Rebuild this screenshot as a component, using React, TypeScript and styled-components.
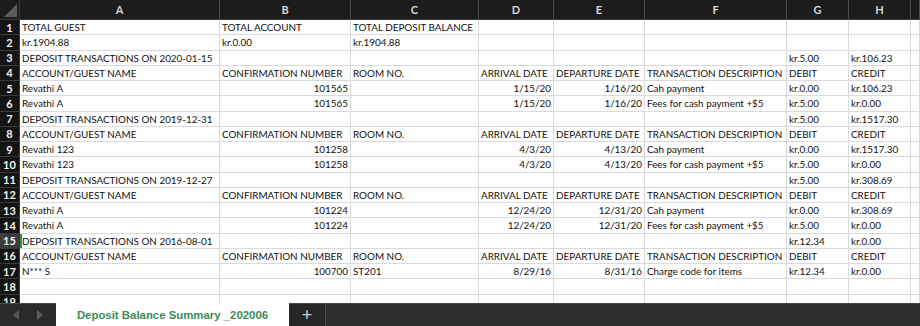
import React from "react";
import styled, { createGlobalStyle } from "styled-components";

const Global = createGlobalStyle`
  html, body { margin: 0; padding: 0; background: #2b2b2b; }
  body { width: 920px; height: 326px; overflow: hidden; }
`;

const ROW_H = 15.25;
const COLS = [200, 131, 128, 75, 91, 142, 62, 62];
const LETTERS = ["A", "B", "C", "D", "E", "F", "G", "H", ""];

type CellData = { t: string; r?: boolean };
const H = ["ACCOUNT/GUEST NAME", "CONFIRMATION NUMBER", "ROOM NO.", "ARRIVAL DATE", "DEPARTURE DATE", "TRANSACTION DESCRIPTION", "DEBIT", "CREDIT"];
const hdr = (): CellData[] => H.map((t) => ({ t }));
const sec = (d: string, g: string, h: string): CellData[] => [
  { t: `DEPOSIT TRANSACTIONS ON ${d}` }, { t: "" }, { t: "" }, { t: "" }, { t: "" }, { t: "" }, { t: g }, { t: h },
];
const tx = (n: string, c: string, room: string, a: string, dep: string, desc: string, g: string, h: string): CellData[] => [
  { t: n }, { t: c, r: true }, { t: room }, { t: a, r: true }, { t: dep, r: true }, { t: desc }, { t: g }, { t: h },
];
const empty = (): CellData[] => COLS.map(() => ({ t: "" }));

const ROWS: CellData[][] = [
  [{ t: "TOTAL GUEST" }, { t: "TOTAL ACCOUNT" }, { t: "TOTAL DEPOSIT BALANCE" }, { t: "" }, { t: "" }, { t: "" }, { t: "" }, { t: "" }],
  [{ t: "kr.1904.88" }, { t: "kr.0.00" }, { t: "kr.1904.88" }, { t: "" }, { t: "" }, { t: "" }, { t: "" }, { t: "" }],
  sec("2020-01-15", "kr.5.00", "kr.106.23"),
  hdr(),
  tx("Revathi A", "101565", "", "1/15/20", "1/16/20", "Cah payment", "kr.0.00", "kr.106.23"),
  tx("Revathi A", "101565", "", "1/15/20", "1/16/20", "Fees for cash payment +$5", "kr.5.00", "kr.0.00"),
  sec("2019-12-31", "kr.5.00", "kr.1517.30"),
  hdr(),
  tx("Revathi 123", "101258", "", "4/3/20", "4/13/20", "Cah payment", "kr.0.00", "kr.1517.30"),
  tx("Revathi 123", "101258", "", "4/3/20", "4/13/20", "Fees for cash payment +$5", "kr.5.00", "kr.0.00"),
  sec("2019-12-27", "kr.5.00", "kr.308.69"),
  hdr(),
  tx("Revathi A", "101224", "", "12/24/20", "12/31/20", "Cah payment", "kr.0.00", "kr.308.69"),
  tx("Revathi A", "101224", "", "12/24/20", "12/31/20", "Fees for cash payment +$5", "kr.5.00", "kr.0.00"),
  sec("2016-08-01", "kr.12.34", "kr.0.00"),
  hdr(),
  tx("N*** S", "100700", "ST201", "8/29/16", "8/31/16", "Charge code for items", "kr.12.34", "kr.0.00"),
  empty(),
  empty(),
];

const Page = styled.div`
  width: 920px;
  height: 326px;
  display: flex;
  flex-direction: column;
  overflow: hidden;
`;

const Sheet = styled.div`
  height: 303px;
  overflow: hidden;
  background: #ffffff;
  display: grid;
  grid-template-columns: 20px ${COLS.map((c) => `${c}px`).join(" ")} 1fr;
  grid-auto-rows: ${ROW_H}px;
  grid-template-rows: 20px;
  align-content: start;
`;

const Corner = styled.div`
  background: #1c1c1c;
  border-right: 1px solid #3a3a3a;
  border-bottom: 1px solid #3a3a3a;
  box-sizing: border-box;
  position: relative;
  &::after {
    content: "";
    position: absolute;
    right: 2px;
    bottom: 2px;
    width: 0;
    height: 0;
    border-left: 13px solid transparent;
    border-bottom: 13px solid #5a5a5a;
  }
`;

const ColHead = styled.div`
  background: #1c1c1c;
  color: #d6d6d6;
  font-family: "Lato", "Open Sans", sans-serif;
  font-weight: 700;
  font-size: 11px;
  display: flex;
  align-items: center;
  justify-content: center;
  border-right: 1px solid #4a4a4a;
  border-bottom: 1px solid #3a3a3a;
  box-sizing: border-box;
`;

const RowHead = styled.div<{ $active?: boolean }>`
  background: ${(p) => (p.$active ? "#3c3c3c" : "#141414")};
  color: #f2f2f2;
  font-family: "Lato", "Open Sans", sans-serif;
  font-weight: 700;
  font-size: 11px;
  display: flex;
  align-items: center;
  justify-content: center;
  border-bottom: 1px solid #3a3a3a;
  border-right: 1px solid #3a3a3a;
  box-sizing: border-box;
`;

const Cell = styled.div<{ $right?: boolean; $sel?: boolean }>`
  color: #111111;
  font-family: "Lato", "Open Sans", sans-serif;
  font-size: 9.9px;
  line-height: 14px;
  padding: 0 2px;
  white-space: nowrap;
  overflow: hidden;
  display: flex;
  align-items: center;
  justify-content: ${(p) => (p.$right ? "flex-end" : "flex-start")};
  border-right: 1px solid #dadada;
  border-bottom: 1px solid #dadada;
  box-sizing: border-box;
  ${(p) => (p.$sel ? "box-shadow: inset 2px 0 0 #2f8a4c;" : "")}
`;

const TabBar = styled.div`
  height: 23px;
  display: flex;
  background: #2e2e2e;
  border-top: 1px solid #4a4a4a;
  box-sizing: border-box;
`;

const Nav = styled.div`
  width: 56px;
  display: flex;
  align-items: center;
  justify-content: space-around;
  background: #2a2a2a;
  padding: 0 4px;
  box-sizing: border-box;
`;

const Tab = styled.div`
  width: 233px;
  background: #ffffff;
  color: #3d8c58;
  font-family: "Liberation Sans", Arial, sans-serif;
  font-weight: 700;
  font-size: 11.4px;
  display: flex;
  align-items: center;
  justify-content: center;
  margin-top: -1px;
`;

const AddTab = styled.div`
  width: 36px;
  background: #262626;
  color: #cfcfcf;
  font-family: "Liberation Sans", Arial, sans-serif;
  font-size: 18px;
  display: flex;
  align-items: center;
  justify-content: center;
  border-right: 1px solid #4a4a4a;
`;

const Arrow = ({ dir }: { dir: "l" | "r" }) => (
  <svg width="8" height="10" viewBox="0 0 8 10">
    {dir === "l" ? <path d="M7 0 L1 5 L7 10 Z" fill="#555" /> : <path d="M1 0 L7 5 L1 10 Z" fill="#5c5c5c" />}
  </svg>
);

export default function App() {
  return (
    <Page>
      <Global />
      <Sheet>
        <Corner />
        {LETTERS.map((l, i) => (
          <ColHead key={`h${i}`}>{l}</ColHead>
        ))}
        {ROWS.map((row, ri) => (
          <React.Fragment key={ri}>
            <RowHead $active={ri === 14}>{ri + 1}</RowHead>
            {row.map((c, ci) => (
              <Cell key={ci} $right={c.r} $sel={ri === 14 && ci === 0}>
                {c.t}
              </Cell>
            ))}
            <Cell />
          </React.Fragment>
        ))}
      </Sheet>
      <TabBar>
        <Nav>
          <Arrow dir="l" />
          <Arrow dir="r" />
        </Nav>
        <Tab>Deposit Balance Summary _202006</Tab>
        <AddTab>+</AddTab>
      </TabBar>
    </Page>
  );
}
